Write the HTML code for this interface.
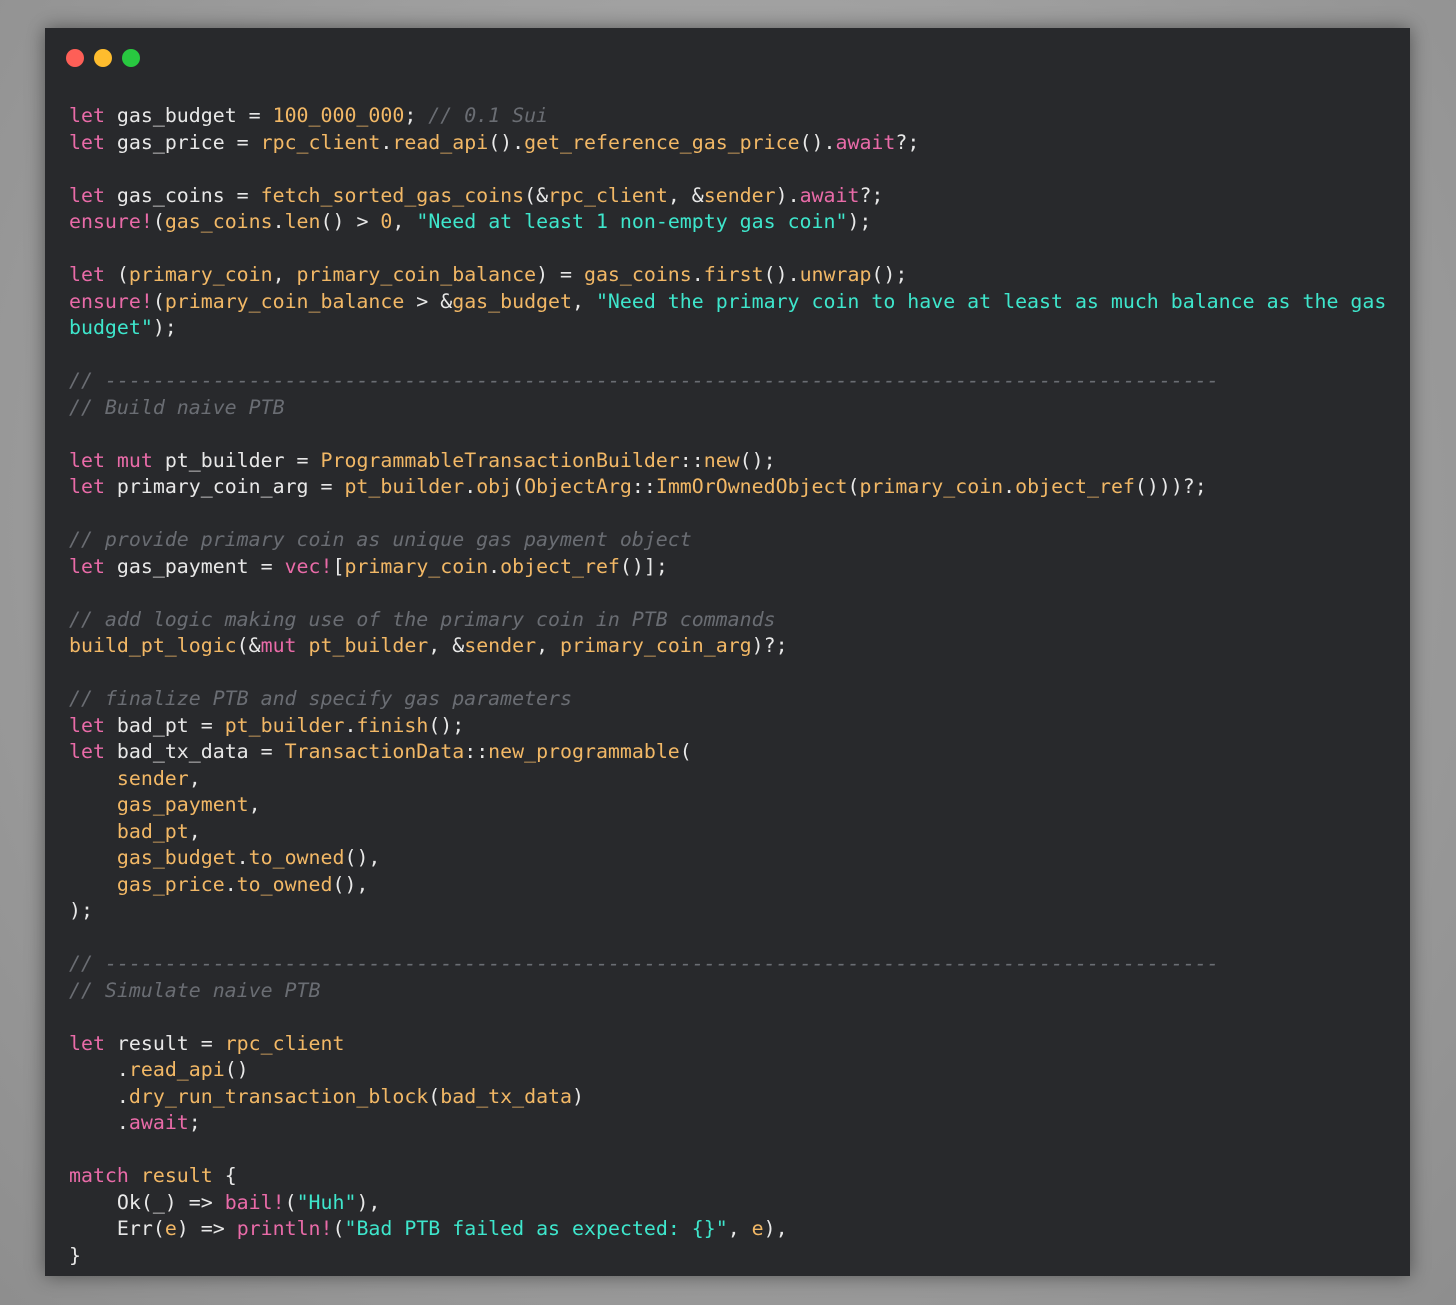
<!DOCTYPE html>
<html><head><meta charset="utf-8"><style>
html,body{margin:0;padding:0;}
body{width:1456px;height:1305px;background:radial-gradient(ellipse at 50% 40%,#b4b4b4 0%,#9c9c9c 60%,#8e8e8e 100%);position:relative;overflow:hidden;}
.win{position:absolute;left:45px;top:28px;width:1365px;height:1248px;background:#28292c;box-shadow:0 0 18px rgba(0,0,0,0.45);}
.dot{position:absolute;top:21px;width:18px;height:18px;border-radius:50%;}
pre{position:absolute;left:24px;top:75px;margin:0;font-family:"DejaVu Sans Mono","Liberation Mono",monospace;font-size:19.9px;line-height:26.5px;color:#e8e8e8;white-space:pre;}
.k{color:#e96ba8}.o{color:#f2b866}.s{color:#3ee6cc}.c{color:#6a6d73;font-style:italic}
</style></head><body>
<div class="win">
<div class="dot" style="left:21px;background:#fe5f57"></div>
<div class="dot" style="left:49px;background:#febc2e"></div>
<div class="dot" style="left:77px;background:#28c840"></div>
<pre><span class="k">let</span> gas_budget = <span class="o">100_000_000</span>; <span class="c">// 0.1 Sui</span>
<span class="k">let</span> gas_price = <span class="o">rpc_client</span>.<span class="o">read_api</span>().<span class="o">get_reference_gas_price</span>().<span class="k">await</span>?;

<span class="k">let</span> gas_coins = <span class="o">fetch_sorted_gas_coins</span>(&amp;<span class="o">rpc_client</span>, &amp;<span class="o">sender</span>).<span class="k">await</span>?;
<span class="k">ensure!</span>(<span class="o">gas_coins</span>.<span class="o">len</span>() &gt; <span class="o">0</span>, <span class="s">"Need at least 1 non-empty gas coin"</span>);

<span class="k">let</span> (<span class="o">primary_coin</span>, <span class="o">primary_coin_balance</span>) = <span class="o">gas_coins</span>.<span class="o">first</span>().<span class="o">unwrap</span>();
<span class="k">ensure!</span>(<span class="o">primary_coin_balance</span> &gt; &amp;<span class="o">gas_budget</span>, <span class="s">"Need the primary coin to have at least as much balance as the gas</span>
<span class="s">budget"</span>);

<span class="c">// ---------------------------------------------------------------------------------------------</span>
<span class="c">// Build naive PTB</span>

<span class="k">let</span> <span class="k">mut</span> pt_builder = <span class="o">ProgrammableTransactionBuilder</span>::<span class="o">new</span>();
<span class="k">let</span> primary_coin_arg = <span class="o">pt_builder</span>.<span class="o">obj</span>(<span class="o">ObjectArg</span>::<span class="o">ImmOrOwnedObject</span>(<span class="o">primary_coin</span>.<span class="o">object_ref</span>()))?;

<span class="c">// provide primary coin as unique gas payment object</span>
<span class="k">let</span> gas_payment = <span class="k">vec!</span>[<span class="o">primary_coin</span>.<span class="o">object_ref</span>()];

<span class="c">// add logic making use of the primary coin in PTB commands</span>
<span class="o">build_pt_logic</span>(&amp;<span class="k">mut</span> <span class="o">pt_builder</span>, &amp;<span class="o">sender</span>, <span class="o">primary_coin_arg</span>)?;

<span class="c">// finalize PTB and specify gas parameters</span>
<span class="k">let</span> bad_pt = <span class="o">pt_builder</span>.<span class="o">finish</span>();
<span class="k">let</span> bad_tx_data = <span class="o">TransactionData</span>::<span class="o">new_programmable</span>(
    <span class="o">sender</span>,
    <span class="o">gas_payment</span>,
    <span class="o">bad_pt</span>,
    <span class="o">gas_budget</span>.<span class="o">to_owned</span>(),
    <span class="o">gas_price</span>.<span class="o">to_owned</span>(),
);

<span class="c">// ---------------------------------------------------------------------------------------------</span>
<span class="c">// Simulate naive PTB</span>

<span class="k">let</span> result = <span class="o">rpc_client</span>
    .<span class="o">read_api</span>()
    .<span class="o">dry_run_transaction_block</span>(<span class="o">bad_tx_data</span>)
    .<span class="k">await</span>;

<span class="k">match</span> <span class="o">result</span> {
    Ok(_) =&gt; <span class="k">bail!</span>(<span class="s">"Huh"</span>),
    Err(<span class="o">e</span>) =&gt; <span class="k">println!</span>(<span class="s">"Bad PTB failed as expected: {}"</span>, <span class="o">e</span>),
}</pre>
</div>
</body></html>
